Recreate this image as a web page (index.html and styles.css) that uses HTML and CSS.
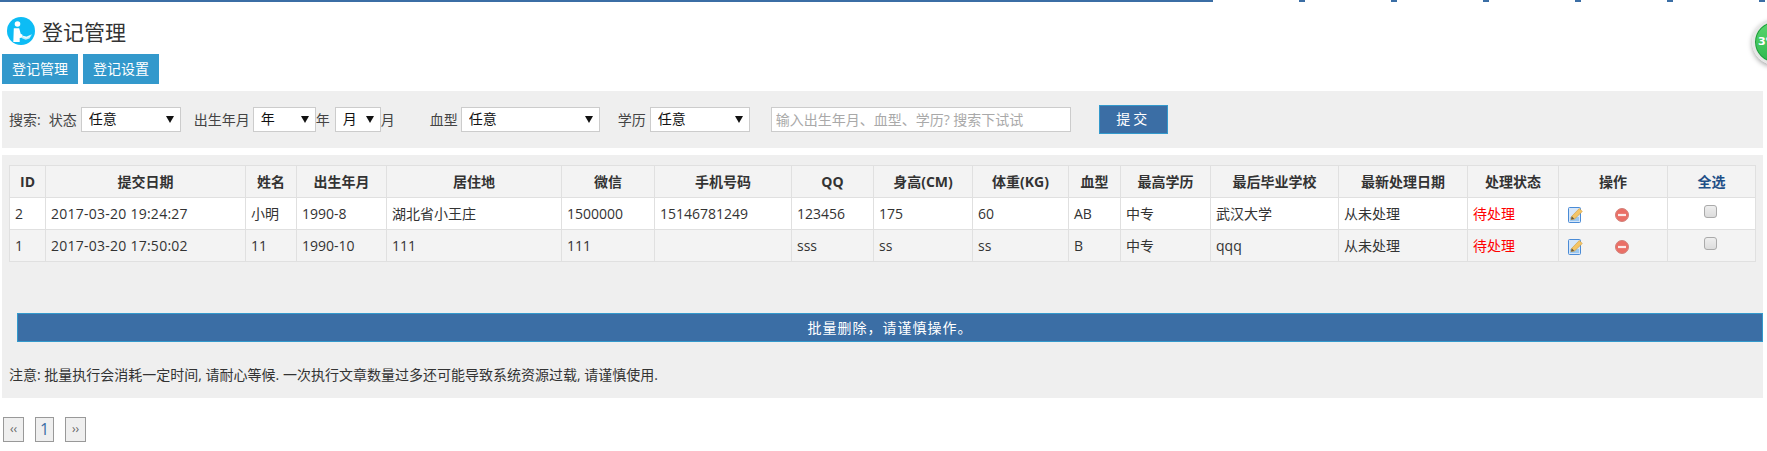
FILE: index.html
```html
<!DOCTYPE html>
<html lang="zh">
<head>
<meta charset="utf-8">
<title>登记管理</title>
<link rel="stylesheet" href="styles.css">
</head>
<body>
<div class="topbar"><i class="seg-long"></i><i></i><i></i><i></i><i></i><i></i><i></i></div>
<div class="badge"><span>3%</span></div>
<header class="title">
  <svg class="title-icon" viewBox="0 0 28 28"><circle cx="14" cy="14" r="14" fill="#0dbcf5"/><circle cx="10.500" cy="7" r="2.800" fill="#fff"/><path d="M6.800 11.300h5.400l1.500 5.500 1.800 1v2.700l-2.800.4v4H6.300z" fill="#fff"/><path d="M15 18.500l4.500 1 5.500-2.200-2.500 4.200-3.800 1.200-3.700-1.500z" fill="#bfeefc"/><path d="M16 19.500l3.500 1.200 3.500-1.700" fill="none" stroke="#fff" stroke-width=".8"/></svg>
  <h1>登记管理</h1>
</header>
<nav class="tabs"><a class="tab">登记管理</a><a class="tab">登记设置</a></nav>
<form class="search">
  <span class="lbl">搜索:</span>
  <span class="lbl g-status">状态</span>
  <span class="sel w100"><select><option>任意</option></select></span>
  <span class="lbl g-birth">出生年月</span>
  <span class="sel w63"><select><option>年</option></select></span>
  <span class="lbl">年</span>
  <span class="sel w46 g-month"><select><option>月</option></select></span>
  <span class="lbl">月</span>
  <span class="lbl g-blood">血型</span>
  <span class="sel w139"><select><option>任意</option></select></span>
  <span class="lbl g-edu">学历</span>
  <span class="sel w100"><select><option>任意</option></select></span>
  <input class="kw" type="text" placeholder="输入出生年月、血型、学历? 搜索下试试">
  <button class="submit" type="button">提交</button>
</form>
<main class="panel">
  <table class="grid">
    <colgroup><col class="c1"><col class="c2"><col class="c3"><col class="c4"><col class="c5"><col class="c6"><col class="c7"><col class="c8"><col class="c9"><col class="c10"><col class="c11"><col class="c12"><col class="c13"><col class="c14"><col class="c15"><col class="c16"><col class="c17"></colgroup>
    <thead><tr><th>ID</th><th>提交日期</th><th>姓名</th><th>出生年月</th><th>居住地</th><th>微信</th><th>手机号码</th><th>QQ</th><th>身高(CM)</th><th>体重(KG)</th><th>血型</th><th>最高学历</th><th>最后毕业学校</th><th>最新处理日期</th><th>处理状态</th><th>操作</th><th><a class="all">全选</a></th></tr></thead>
    <tbody>
      <tr><td>2</td><td class="dt">2017-03-20 19:24:27</td><td>小明</td><td>1990-8</td><td>湖北省小王庄</td><td>1500000</td><td>15146781249</td><td>123456</td><td>175</td><td>60</td><td>AB</td><td>中专</td><td>武汉大学</td><td>从未处理</td><td class="todo">待处理</td>
        <td class="ops"><svg class="ico-edit" viewBox="0 0 15 16"><rect x=".5" y=".5" width="12" height="15" rx="1" fill="#d6e6f8" stroke="#4a8bd6"/><rect x="2" y="10" width="9" height="4" fill="#9cc8f0"/><path d="M3 12.500l.8-3.300L11.300 1.500l3 3L6.500 12z" fill="#f4c566" stroke="#d09a3a" stroke-width=".6"/><path d="M3 12.500l.8-3.300 2.600 2.700z" fill="#6a5a3c"/></svg><svg class="ico-del" viewBox="0 0 14 14"><circle cx="7" cy="7" r="6.500" fill="#ea6f66" stroke="#d0827b"/><rect x="3" y="5.900" width="8" height="2.200" fill="#fbe9e7"/></svg></td>
        <td class="chk"><input type="checkbox"></td></tr>
      <tr class="alt"><td>1</td><td class="dt">2017-03-20 17:50:02</td><td>11</td><td>1990-10</td><td>111</td><td>111</td><td></td><td>sss</td><td>ss</td><td>ss</td><td>B</td><td>中专</td><td>qqq</td><td>从未处理</td><td class="todo">待处理</td>
        <td class="ops"><svg class="ico-edit" viewBox="0 0 15 16"><rect x=".5" y=".5" width="12" height="15" rx="1" fill="#d6e6f8" stroke="#4a8bd6"/><rect x="2" y="10" width="9" height="4" fill="#9cc8f0"/><path d="M3 12.500l.8-3.300L11.300 1.500l3 3L6.500 12z" fill="#f4c566" stroke="#d09a3a" stroke-width=".6"/><path d="M3 12.500l.8-3.300 2.600 2.700z" fill="#6a5a3c"/></svg><svg class="ico-del" viewBox="0 0 14 14"><circle cx="7" cy="7" r="6.500" fill="#ea6f66" stroke="#d0827b"/><rect x="3" y="5.900" width="8" height="2.200" fill="#fbe9e7"/></svg></td>
        <td class="chk"><input type="checkbox"></td></tr>
    </tbody>
  </table>
  <div class="bulk">批量删除，请谨慎操作。</div>
  <p class="note">注意: 批量执行会消耗一定时间, 请耐心等候. 一次执行文章数量过多还可能导致系统资源过载, 请谨慎使用.</p>
</main>
<div class="pager"><a class="pg sm">‹‹</a><a class="pg cur">1</a><a class="pg sm">››</a></div>
</body>
</html>
```
FILE: styles.css
```css
* { box-sizing: border-box; }
html, body { margin: 0; padding: 0; }
body {
  width: 1767px; height: 451px; overflow: hidden; position: relative;
  background: #fff; color: #333;
  font: 14px/20px "Open Sans", "Noto Sans CJK SC", sans-serif;
}
.topbar { display: flex; gap: 86px; height: 2px; }
.topbar i { display: block; width: 6px; background: #3b6ea5; flex: none; }
.topbar .seg-long { width: 1213px; }
.badge {
  position: absolute; left: 1752px; top: 19px; width: 46px; height: 46px; border-radius: 50%;
  background: linear-gradient(#5ad66e, #2fb84e); border: 3px solid #e6e6e6;
  box-shadow: 0 2px 5px rgba(0,0,0,.35), inset 0 0 0 1px #1f9a3c;
  color: #fff; font: bold 11px/40px "DejaVu Sans", sans-serif; padding-left: 3px; white-space: nowrap;
}
.title { display: flex; align-items: flex-start; padding: 15px 0 0 7px; height: 52px; }
.title-icon { width: 28px; height: 28px; flex: none; }
.title h1 { margin: 0 0 0 7px; font-size: 21px; font-weight: 400; line-height: 30px; color: #333; }
.tabs { display: flex; gap: 5px; padding-left: 2px; }
.tab { display: block; width: 76px; height: 30px; background: #39c; color: #fff; text-align: center; line-height: 30px; font-size: 14px; }
.search {
  display: flex; align-items: center; height: 57px; margin: 7px 4px 0 2px; padding-left: 7px;
  background: #efefef; font-size: 14px; white-space: nowrap;
}
.lbl { flex: none; color: #444; }
.g-status { margin-left: 8px; margin-right: 4px; }
.g-birth { margin-left: 13px; margin-right: 3px; }
.g-month { margin-left: 5px; }
.g-blood { margin-left: 35px; margin-right: 3px; }
.g-edu { margin-left: 18px; margin-right: 4px; }
.sel { position: relative; display: block; height: 25px; flex: none; }
.sel::after {
  content: ""; position: absolute; right: 7px; top: 9px;
  border-left: 4px solid transparent; border-right: 4px solid transparent; border-top: 7px solid #111;
}
.sel select {
  appearance: none; -webkit-appearance: none; width: 100%; height: 100%;
  background: #fff; border: 1px solid #ccc; border-radius: 0; padding: 0 0 2px 7px; color: #111;
  font: 14px "Open Sans", "Noto Sans CJK SC", sans-serif;
}
.w100 { width: 100px; } .w63 { width: 63px; } .w46 { width: 46px; } .w139 { width: 139px; }
.kw {
  width: 300px; height: 25px; margin-left: 21px; padding: 0 4px; border: 1px solid #ccc; background: #fff;
  font: 14px "Open Sans", "Noto Sans CJK SC", sans-serif; color: #333; flex: none;
}
.kw::placeholder { color: #a9a9a9; opacity: 1; }
.submit {
  width: 69px; height: 29px; margin-left: 28px; padding: 0 0 4px; border: 1px solid #39c; background: #3b6ea5; color: #fff;
  font: 14px "Open Sans", "Noto Sans CJK SC", sans-serif; letter-spacing: 3px; flex: none;
}
.panel { margin: 7px 4px 0 2px; padding: 10px 8px 13px 7px; height: 243px; background: #efefef; }
.grid { width: 1746px; table-layout: fixed; border-collapse: collapse; background: #fff; font-size: 14px; }
.grid th, .grid td { height: 32px; padding: 0 5px; border: 1px solid #e0e0e0; white-space: nowrap; overflow: hidden; }
.grid th { background: #f3f3f3; font-weight: 700; text-align: center; color: #333; }
.grid td { text-align: left; color: #333; }
.grid .alt td { background: #f3f3f3; }
.grid .todo { color: #f00; }
.grid .dt { letter-spacing: .25px; }
.all { color: #1f4f87; }
.c1 { width: 36px; } .c2 { width: 200px; } .c3 { width: 51px; } .c4 { width: 90px; } .c5 { width: 175px; }
.c6 { width: 93px; } .c7 { width: 137px; } .c8 { width: 82px; } .c9 { width: 99px; } .c10 { width: 96px; }
.c11 { width: 52px; } .c12 { width: 90px; } .c13 { width: 128px; } .c14 { width: 129px; } .c15 { width: 91px; }
.c16 { width: 109px; } .c17 { width: 88px; }
.ops { font-size: 0; }
.grid td.ops { padding: 3px 0 0 9px; }
.ops svg { vertical-align: middle; }
.ico-edit { width: 15px; height: 16px; }
.ico-del { width: 14px; height: 14px; margin-left: 32px; }
.grid td.chk { text-align: center; vertical-align: top; padding: 7px 2px 0 0; line-height: 0; }
.chk input {
  appearance: none; -webkit-appearance: none; margin: 0; width: 13px; height: 13px;
  border: 1px solid #aaa; border-radius: 3px; background: linear-gradient(#eee, #dcdcdc);
}
.bulk {
  height: 29px; margin: 51px -8px 0 8px; background: #3b6ea5; border: 1px solid #39c; color: #fff;
  text-align: center; line-height: 27px; letter-spacing: 1px;
}
.note { margin: 23px 0 0; font-size: 14px; line-height: 20px; color: #333; white-space: nowrap; }
.pager { display: flex; gap: 11px; margin: 19px 0 0 3px; }
.pg { display: block; height: 25px; width: 21px; border: 1px solid #999; background: #efefef; text-align: center; line-height: 22px; color: #3b6ea5; }
.pg.cur { width: 19px; font-size: 16px; }
.pg.sm { color: #666; font-size: 12px; }
```
